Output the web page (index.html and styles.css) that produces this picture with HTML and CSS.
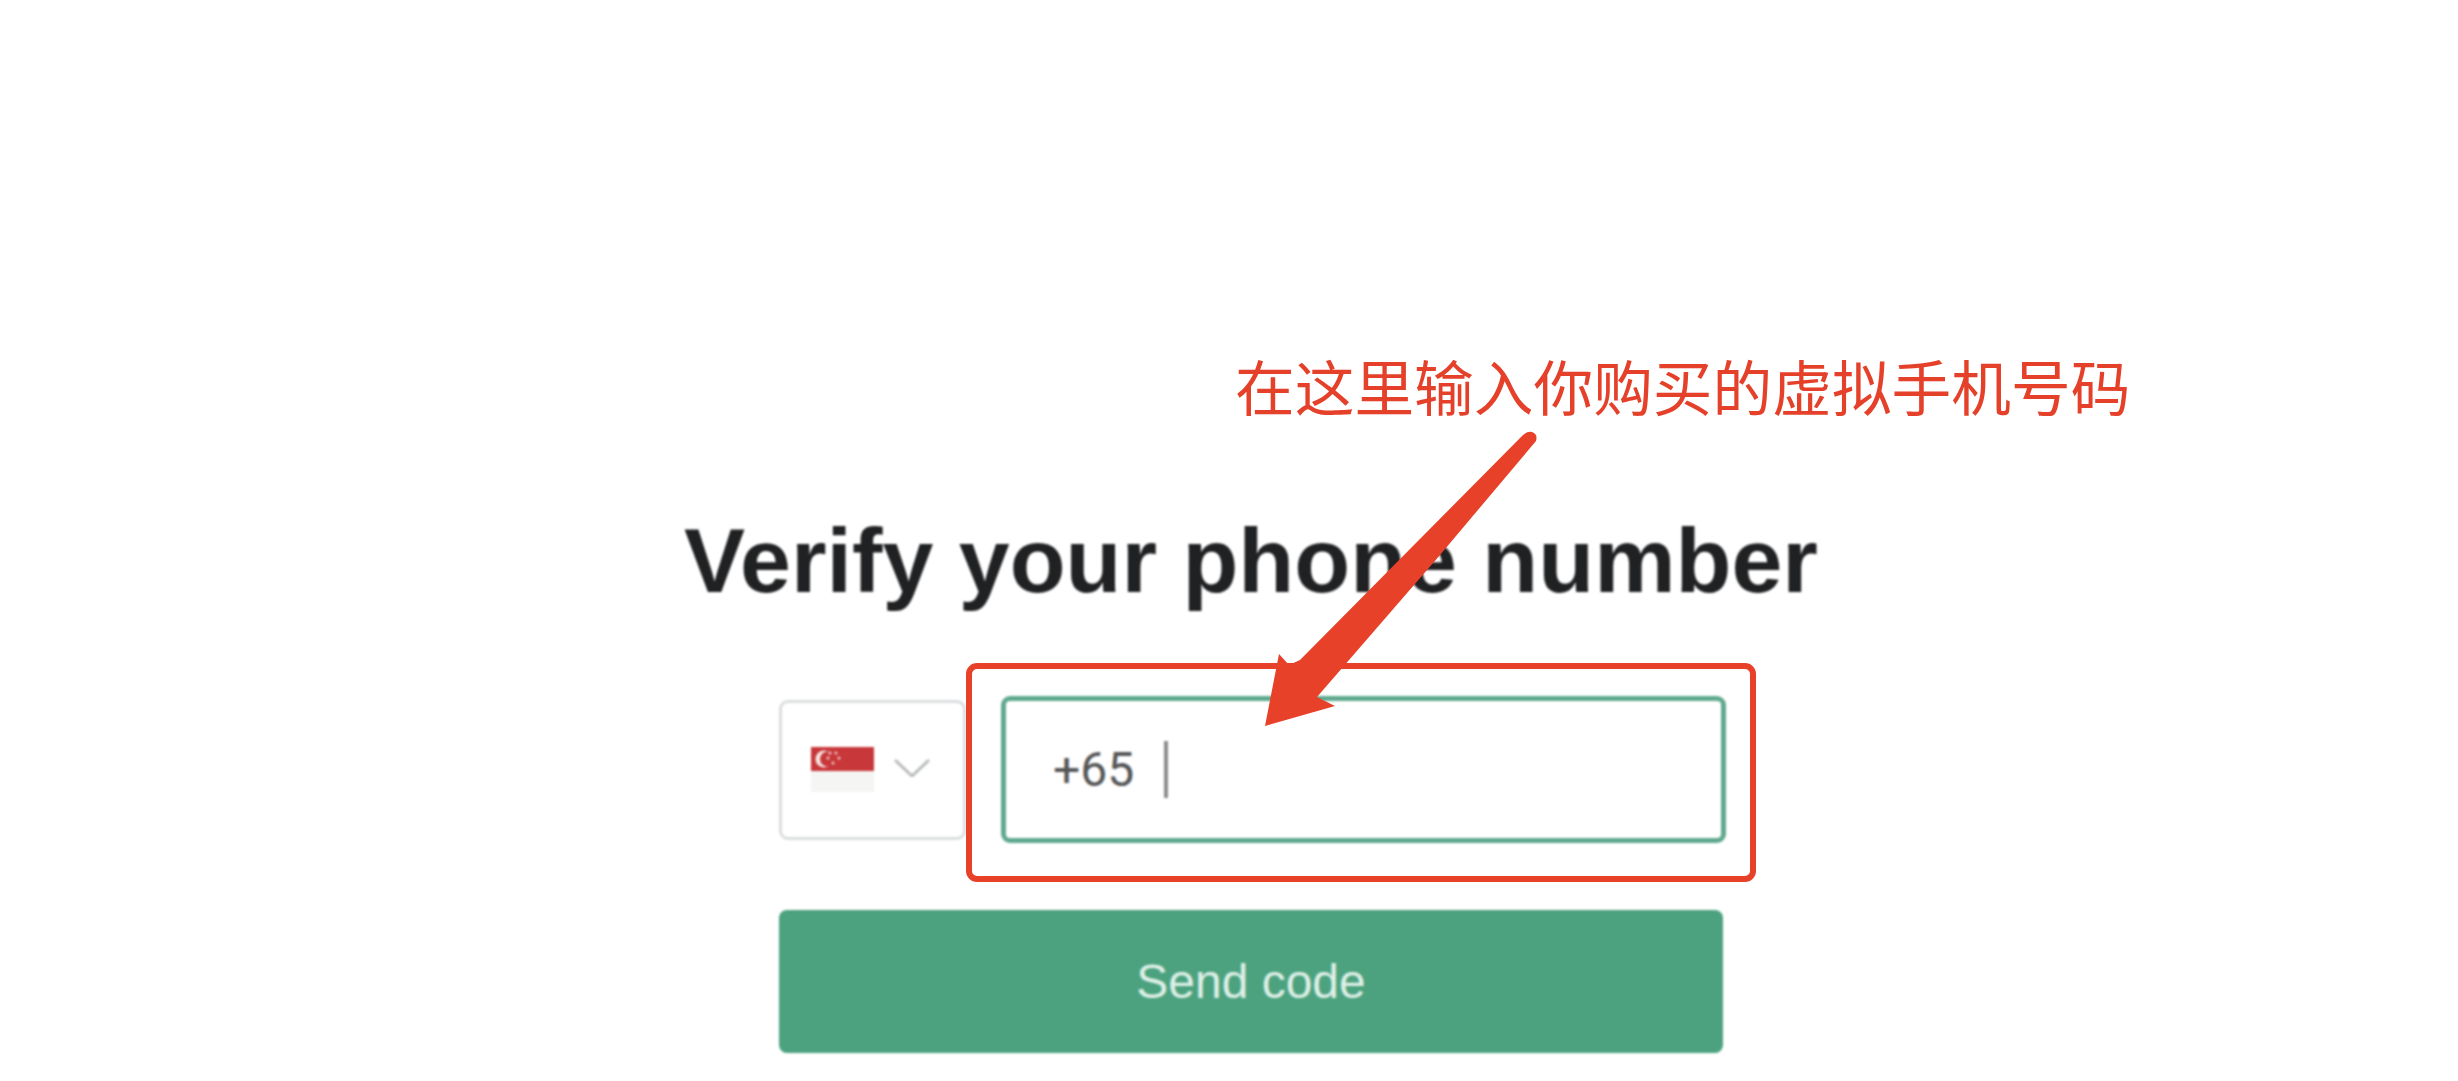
FILE: index.html
```html
<!DOCTYPE html>
<html lang="en">
<head>
<meta charset="utf-8">
<title>Verify your phone number</title>
<link rel="stylesheet" href="styles.css">
</head>
<body>
<main class="page">
  <section class="card">
    <h1 class="title">Verify your phone number</h1>
    <div class="phone-row">
      <div class="country">
        <svg class="flag" viewBox="0 0 63 45" aria-hidden="true">
          <rect width="63" height="24" fill="#c8373a"/>
          <rect y="24" width="63" height="21" fill="#f5f5f3"/>
          <circle cx="13" cy="12" r="8.5" fill="#f6e6e4"/>
          <circle cx="16.5" cy="12" r="7.5" fill="#c8373a"/>
          <g fill="#eec9c5">
            <circle cx="19" cy="6" r="1.5"/><circle cx="25" cy="6" r="1.5"/><circle cx="28" cy="11" r="1.5"/><circle cx="17" cy="11" r="1.5"/><circle cx="22" cy="16" r="1.5"/>
          </g>
        </svg>
        <svg class="chevron" viewBox="0 0 36 18" aria-hidden="true"><path d="M1 1 L18 17 L35 1"/></svg>
      </div>
      <div class="phone-input"><span class="prefix">+65</span><span class="caret"></span></div>
    </div>
    <button class="send" type="button">Send code</button>
  </section>
</main>
<div class="note">在这里输入你购买的虚拟手机号码</div>
<div class="highlight"></div>
<svg class="arrow" viewBox="0 0 2458 1081" aria-hidden="true">
  <path d="M1522 436 Q1527 431 1532 432 Q1538 434 1536 441 L1440 555 L1317 697 L1335 706 L1265 726 L1279 654 L1289 665 L1300 660 Z"/>
</svg>
</body>
</html>
```
FILE: styles.css
```css
* { box-sizing: border-box; }
html, body { margin: 0; height: 100%; background: #fff; overflow: hidden; }
.page { padding: 508px 0 0 779px; }
.card { width: 944px; display: flex; flex-direction: column; filter: blur(0.9px); }
.title {
  margin: 0 -100px 84px;
  font: 700 91.5px/104px "Liberation Sans", Arial, sans-serif;
  color: #202123;
  text-align: center;
  white-space: nowrap;
}
.phone-row { display: flex; align-items: center; gap: 35px; height: 147px; margin-right: -3px; }
.country {
  width: 187px;
  height: 140px;
  border: 3px solid #dbdddf;
  border-radius: 9px;
  display: flex;
  align-items: center;
  padding-left: 29px;
  gap: 20px;
}
.flag { width: 63px; height: 45px; display: block; }
.chevron { width: 36px; height: 18px; fill: none; stroke: #b9bcbd; stroke-width: 3; display: block; margin-top: -3px; }
.phone-input {
  flex: 1;
  height: 147px;
  border: 5px solid #5fa98e;
  border-radius: 9px;
  display: flex;
  align-items: center;
  padding-left: 47px;
  gap: 30px;
  background: #fff;
}
.prefix { font: 400 48px/1 Roboto, "Liberation Sans", sans-serif; color: #555657; }
.caret { width: 4px; height: 57px; background: #8b8c8d; }
.send {
  margin-top: 67px;
  height: 143px;
  border: 0;
  border-radius: 8px;
  background: #4ca27e;
  color: #dff0e8;
  font: 400 48px/1 "Liberation Sans", Arial, sans-serif;
  padding: 0;
}
.note {
  position: absolute;
  left: 1235px;
  top: 347px;
  font: 400 59.7px/76px "Noto Sans CJK SC", sans-serif;
  color: #e5412a;
  white-space: nowrap;
}
.highlight {
  position: absolute;
  left: 966px;
  top: 663px;
  width: 790px;
  height: 219px;
  border: 6px solid #e8412a;
  border-radius: 11px;
}
.arrow { position: absolute; left: 0; top: 0; width: 2458px; height: 1081px; fill: #e8412a; }
```
